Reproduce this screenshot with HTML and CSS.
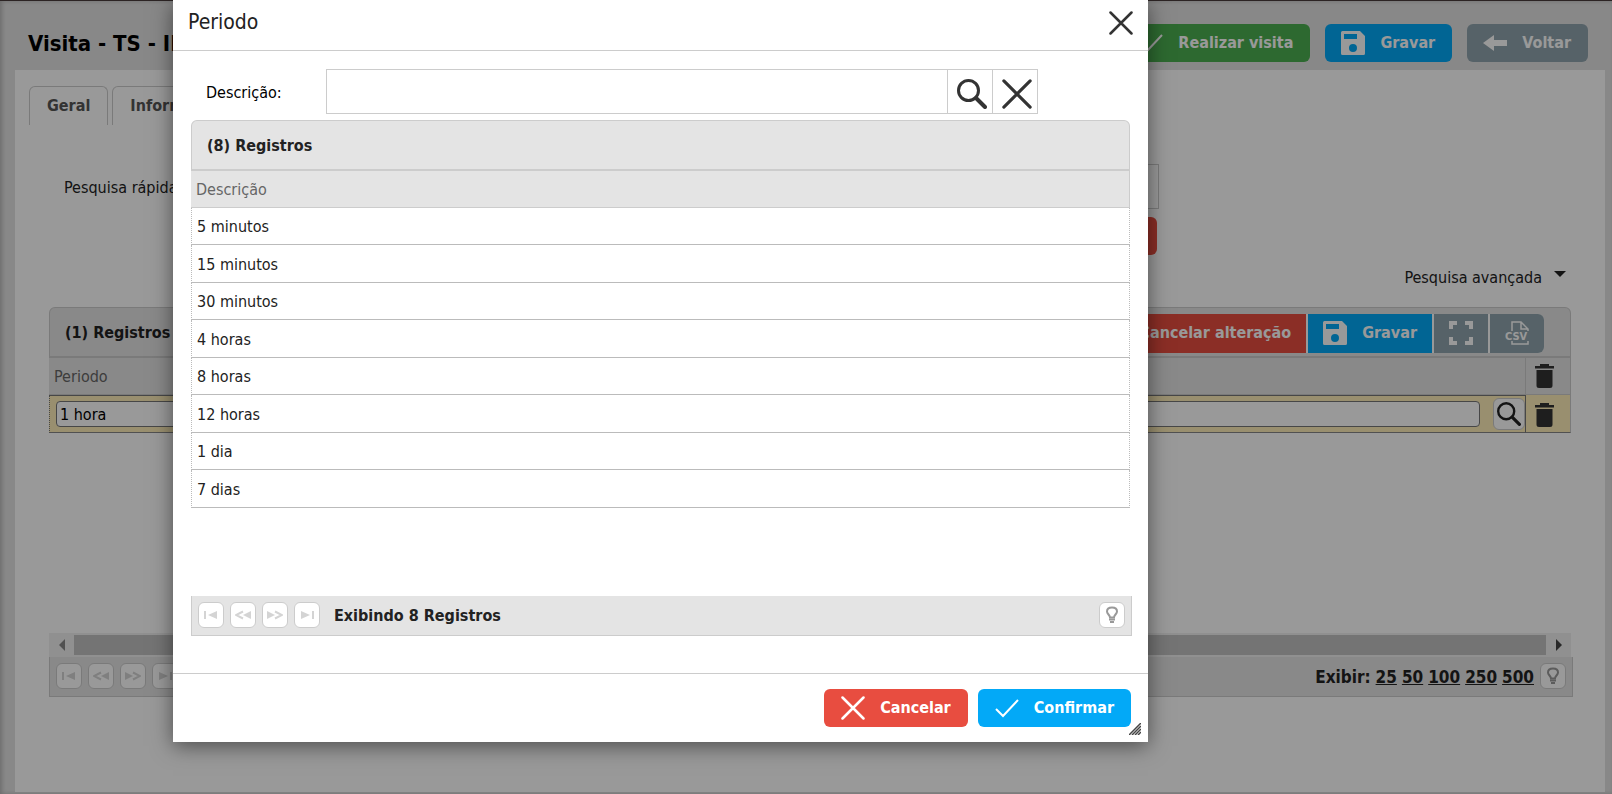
FILE: index.html
```html
<!DOCTYPE html>
<html lang="pt-BR">
  <head>
    <meta charset="utf-8" />
    <title>Visita</title>
    <link rel="stylesheet" href="styles.css">
  </head>
  <body>
    <svg class="sprite">
      <symbol id="i-check" viewBox="0 0 24 24">
        <path d="M1 13l7 7L23 4" fill="none" stroke="currentColor" stroke-width="2" />
      </symbol>
      <symbol id="i-close" viewBox="0 0 24 24">
        <path d="M1.500 1.500l21 21M22.500 1.500l-21 21" fill="none" stroke="currentColor" stroke-width="2.500" stroke-linecap="round" />
      </symbol>
      <symbol id="i-save" viewBox="0 0 24 24">
        <path fill="currentColor" fill-rule="evenodd" d="M1.500 0H19l5 5v17.500a1.500 1.500 0 0 1-1.500 1.500h-21A1.500 1.500 0 0 1 0 22.500v-21A1.500 1.500 0 0 1 1.500 0zM3 3v5h13V3zM12 13a4 4 0 1 0 0 8 4 4 0 0 0 0-8z" />
      </symbol>
      <symbol id="i-back" viewBox="0 0 24 24">
        <path fill="currentColor" d="M0 12l11-8v5h13v6H11v5z" />
      </symbol>
      <symbol id="i-search" viewBox="0 0 30 30">
        <circle cx="11.500" cy="11.500" r="10" fill="none" stroke="currentColor" stroke-width="3" />
        <path d="M19 19l9 9" stroke="currentColor" stroke-width="4" stroke-linecap="round" />
      </symbol>
      <symbol id="i-full" viewBox="0 0 24 24">
        <path fill="none" stroke="currentColor" stroke-width="4" d="M2 8V2h6M16 2h6v6M22 16v6h-6M8 22H2v-6" />
      </symbol>
      <symbol id="i-csv" viewBox="0 0 24 24">
        <path d="M7 10V1h9l7 7v2M7 20v3h16v-3M16 1v7h7" fill="none" stroke="currentColor" stroke-width="1.500" />
        <text x="0" y="19" font-size="11" fill="currentColor">CSV</text>
      </symbol>
      <symbol id="i-trash" viewBox="0 0 20 24">
        <path fill="currentColor" d="M5 0h9v2h5v2.500H0V2h5zM1.500 6h16v15.500a2.500 2.500 0 0 1-2.500 2.500H4a2.500 2.500 0 0 1-2.500-2.500z" />
      </symbol>
      <symbol id="i-first" viewBox="0 0 16 10">
        <path fill="currentColor" d="M1 1h2v8H1zM14 1v8L5 5z" />
      </symbol>
      <symbol id="i-prev" viewBox="0 0 16 10">
        <path fill="currentColor" d="M16 1v8L8 5z" />
        <path fill="none" stroke="currentColor" stroke-width="2" d="M8 1.500L1 5l7 3.500" />
      </symbol>
      <symbol id="i-bulb" viewBox="0 0 14 18">
        <path fill="none" stroke="currentColor" stroke-width="2" d="M5 11.500C5 9 2 8 2 5.500 2 3 4 1.500 7 1.500s5 1.500 5 4C12 8 9 9 9 11.500z" />
        <path stroke="currentColor" stroke-width="2" d="M4 13.500h6M5 16h4" />
      </symbol>
    </svg>

    <div class="page">
      <div class="page-header">
        <h1>Visita - TS - II</h1>
        <div class="actions">
          <button type="button" class="btn green"><svg class="icon"><use href="#i-check" /></svg>Realizar visita</button>
          <button type="button" class="btn blue"><svg class="icon"><use href="#i-save" /></svg>Gravar</button>
          <button type="button" class="btn gray"><svg class="icon"><use href="#i-back" /></svg>Voltar</button>
        </div>
      </div>

      <div class="panel">
        <div class="tabs">
          <button type="button" class="tab">Geral</button>
          <button type="button" class="tab">Informações</button>
        </div>

        <div class="quick-search">
          <label for="quick">Pesquisa rápida:</label>
          <input id="quick" type="text" />
        </div>
        <div class="quick-actions">
          <button type="button" class="btn red"><svg class="icon"><use href="#i-close" /></svg>Limpar</button>
        </div>
        <div class="advanced">
          <button type="button">Pesquisa avançada <span class="caret"></span></button>
        </div>

        <div class="grid">
          <div class="grid-title">
            <span>(1) Registros</span>
            <div class="toolbar">
              <button type="button" class="btn red"><svg class="icon"><use href="#i-close" /></svg>Cancelar alteração</button>
              <button type="button" class="btn blue"><svg class="icon"><use href="#i-save" /></svg>Gravar</button>
              <button type="button" class="btn gray" aria-label="Tela cheia"><svg class="icon"><use href="#i-full" /></svg></button>
              <button type="button" class="btn gray" aria-label="Exportar CSV"><svg class="icon"><use href="#i-csv" /></svg></button>
            </div>
          </div>
          <table class="edit-table">
            <thead>
              <tr>
                <th>Periodo</th>
                <th class="trash"><svg><use href="#i-trash" /></svg></th>
              </tr>
            </thead>
            <tbody>
              <tr>
                <td class="edit-cell">
                  <div class="edit-field">
                    <input type="text" value="1 hora" aria-label="Periodo" />
                    <button type="button" class="lookup" aria-label="Pesquisar"><svg><use href="#i-search" /></svg></button>
                  </div>
                </td>
                <td class="trash"><svg><use href="#i-trash" /></svg></td>
              </tr>
            </tbody>
          </table>
        </div>

        <div class="scrollbar">
          <span class="arrow left"></span>
          <span class="thumb"></span>
          <span class="arrow right"></span>
        </div>
        <div class="pager">
          <button type="button" class="page-btn" aria-label="Primeira"><svg><use href="#i-first" /></svg></button>
          <button type="button" class="page-btn" aria-label="Anterior"><svg><use href="#i-prev" /></svg></button>
          <button type="button" class="page-btn next" aria-label="Próxima"><svg><use href="#i-prev" /></svg></button>
          <button type="button" class="page-btn next" aria-label="Última"><svg><use href="#i-first" /></svg></button>
          <div class="page-sizes">
            <span>Exibir:</span>
            <a href="#">25</a>
            <a href="#">50</a>
            <a href="#">100</a>
            <a href="#">250</a>
            <a href="#">500</a>
          </div>
          <button type="button" class="page-btn bulb" aria-label="Dica"><svg><use href="#i-bulb" /></svg></button>
        </div>
      </div>
    </div>

    <div class="overlay">
      <div class="modal" role="dialog" aria-labelledby="modal-title">
        <div class="modal-header">
          <h2 id="modal-title">Periodo</h2>
          <button type="button" class="close" aria-label="Fechar"><svg class="icon"><use href="#i-close" /></svg></button>
        </div>

        <div class="modal-body">
          <div class="filter">
            <label for="descricao">Descrição:</label>
            <div class="filter-box">
              <input id="descricao" type="text" />
              <button type="button" aria-label="Pesquisar"><svg><use href="#i-search" /></svg></button>
              <button type="button" aria-label="Limpar"><svg><use href="#i-close" /></svg></button>
            </div>
          </div>

          <div class="grid results">
            <div class="grid-title"><span>(8) Registros</span></div>
            <table>
              <thead>
                <tr><th>Descrição</th></tr>
              </thead>
              <tbody>
                <tr><td>5 minutos</td></tr>
                <tr><td>15 minutos</td></tr>
                <tr><td>30 minutos</td></tr>
                <tr><td>4 horas</td></tr>
                <tr><td>8 horas</td></tr>
                <tr><td>12 horas</td></tr>
                <tr><td>1 dia</td></tr>
                <tr><td>7 dias</td></tr>
              </tbody>
            </table>
          </div>

          <div class="pager">
            <button type="button" class="page-btn" aria-label="Primeira"><svg><use href="#i-first" /></svg></button>
            <button type="button" class="page-btn" aria-label="Anterior"><svg><use href="#i-prev" /></svg></button>
            <button type="button" class="page-btn next" aria-label="Próxima"><svg><use href="#i-prev" /></svg></button>
            <button type="button" class="page-btn next" aria-label="Última"><svg><use href="#i-first" /></svg></button>
            <span class="count">Exibindo 8 Registros</span>
            <button type="button" class="page-btn bulb" aria-label="Dica"><svg><use href="#i-bulb" /></svg></button>
          </div>
        </div>

        <div class="modal-footer">
          <button type="button" class="btn red"><svg class="icon"><use href="#i-close" /></svg>Cancelar</button>
          <button type="button" class="btn blue"><svg class="icon"><use href="#i-check" /></svg>Confirmar</button>
        </div>
        <svg class="grip" viewBox="0 0 12 12">
          <path d="M0 12L12 0M3 12l9-9M6 12l6-6M9 12l3-3" stroke="#444" stroke-width="1.500" />
        </svg>
      </div>
    </div>
  </body>
</html>
```

FILE: styles.css
```css
* {
  box-sizing: border-box;
}
body {
  margin: 0;
  font: 16px/20px "DejaVu Sans Condensed", "Noto Sans", sans-serif;
  color: #222;
}
button,
input {
  font: inherit;
  color: inherit;
  margin: 0;
}
button {
  cursor: pointer;
}
h1,
h2 {
  margin: 0;
}
svg {
  display: block;
}
.sprite {
  display: none;
}
.icon {
  width: 24px;
  height: 24px;
}

/* page */
.page {
  min-height: 100vh;
  display: flex;
  flex-direction: column;
  padding: 0 7px 2px 15px;
  background: #e3e3e3;
  border-top: 1px solid #4a3c3c;
  box-shadow: inset 2px 0 4px rgba(0, 0, 0, 0.2);
}
.page-header {
  display: flex;
  justify-content: space-between;
  align-items: center;
  padding: 23px 17px 8px 13px;
}
.page-header h1 {
  padding-top: 2px;
  font-size: 22px;
  line-height: 26px;
  color: #000;
}
.actions {
  display: flex;
  gap: 15px;
}
.btn {
  display: flex;
  align-items: center;
  gap: 15px;
  height: 38px;
  padding: 0 16px;
  border: none;
  border-radius: 6px;
  color: #fff;
  font-weight: bold;
}
.actions .btn {
  padding-right: 17px;
}
.green {
  background: #4caf50;
}
.blue {
  background: #03a9f7;
}
.gray {
  background: #90a4ae;
}
.red {
  background: #e84d40;
}

.panel {
  flex: 1;
  display: flex;
  flex-direction: column;
  padding: 16px 32px 95px 34px;
  background: #fff;
}
.tabs {
  display: flex;
  gap: 4px;
  margin-left: -20px;
}
.tab {
  height: 39px;
  padding: 0 17px;
  border: 1px solid #ccc;
  border-bottom: none;
  border-radius: 6px 6px 0 0;
  background: none;
  color: #555;
  font-weight: bold;
}
.quick-search {
  display: flex;
  align-items: center;
  gap: 30px;
  margin-top: 39px;
  padding: 0 414px 0 15px;
}
.quick-search label,
.filter label {
  padding-top: 2px;
}
.quick-search input {
  flex: 1;
  height: 45px;
  border: 1px solid #ccc;
}
.quick-actions {
  display: flex;
  justify-content: flex-end;
  margin-top: 8px;
  padding-right: 416px;
}
.advanced {
  display: flex;
  justify-content: flex-end;
  margin: 13px 0 19px;
}
.advanced button {
  display: flex;
  gap: 12px;
  padding: 0 7px 0 0;
  border: none;
  background: none;
}
.caret {
  margin-top: 3px;
  align-self: flex-start;
  border: 6px solid transparent;
  border-top-color: #222;
  border-bottom: none;
}

/* grids */
.grid {
  flex: 1;
  margin-right: 2px;
}
.grid-title {
  display: flex;
  justify-content: space-between;
  align-items: center;
  height: 51px;
  padding: 2px 0 0 15px;
  border: 1px solid #ccc;
  border-bottom-width: 2px;
  border-radius: 6px 6px 0 0;
  background: #e4e4e4;
  font-weight: bold;
}
.toolbar {
  display: flex;
  gap: 2px;
  margin-right: 26px;
  background: #fff;
  border-radius: 0 6px 6px 0;
}
.toolbar .btn {
  height: 39px;
  padding: 0 15px;
  border-radius: 0;
}
.toolbar .btn:last-child {
  border-radius: 0 6px 6px 0;
}
table {
  width: 100%;
  border-collapse: separate;
  border-spacing: 0;
}
th {
  height: 37px;
  padding: 2px 5px 0;
  border-right: 1px solid #ccc;
  border-bottom: 1px solid #ccc;
  background: #e4e4e4;
  color: #666;
  font-weight: normal;
  text-align: left;
}
td {
  height: 38px;
  padding: 2px 5px 0;
}
.trash {
  width: 45px;
  padding: 0 9px;
  color: #333;
}
.trash svg {
  width: 20px;
  height: 24px;
}
.edit-table td {
  background: #ffefba;
  border-right: 1px solid #ccc;
  border-bottom: 1px solid #888;
}
.edit-table td.trash {
  padding-top: 3px;
}
.edit-table .edit-cell {
  padding: 0 0 0 6px;
  border-top: 1px solid #777;
  border-left: 1px dotted #777;
  border-right-color: #777;
}
.edit-field {
  display: flex;
  align-items: center;
  gap: 13px;
}
.edit-field input {
  flex: 1;
  height: 26px;
  padding: 0 3px;
  border: 1px solid #777;
  border-radius: 4px;
  background: #fff;
  color: #000;
}
.lookup {
  width: 32px;
  height: 32px;
  padding: 3px;
  border: 1px solid #ccc;
  border-radius: 6px;
  background: #fff;
}
.lookup svg {
  width: 24px;
  height: 24px;
}

.scrollbar {
  display: flex;
  align-items: center;
  height: 24px;
  margin-right: 2px;
  background: #f0f0f0;
}
.thumb {
  flex: 1;
  height: 20px;
  background: #c1c1c1;
}
.arrow {
  width: 25px;
  display: flex;
  justify-content: center;
}
.arrow::before {
  content: "";
  border: 6px solid transparent;
}
.arrow.left::before {
  border-left: none;
  border-right-color: #888;
}
.arrow.right::before {
  border-right: none;
  border-left-color: #444;
}
.pager {
  display: flex;
  align-items: flex-start;
  gap: 6px;
  height: 40px;
  padding: 6px;
  border: 1px solid #ccc;
  border-top: none;
  background: #e4e4e4;
  font-weight: bold;
}
.page-btn {
  display: flex;
  align-items: center;
  justify-content: center;
  width: 26px;
  height: 26px;
  padding: 0;
  border: 1px solid #ccc;
  border-radius: 6px;
  background: #fff;
  color: #d4d4d4;
}
.page-btn svg {
  width: 16px;
  height: 10px;
}
.next svg {
  transform: scaleX(-1);
}
.bulb {
  color: #999;
}
.bulb svg {
  width: 14px;
  height: 18px;
}
.page-sizes {
  display: flex;
  gap: 5px;
  margin-left: auto;
  font-size: 17px;
  line-height: 28px;
}
.page-sizes a {
  color: inherit;
}
.count {
  flex: 1;
  margin-left: 8px;
  line-height: 28px;
}

/* modal */
.overlay {
  position: absolute;
  inset: 0;
  padding: 0 464px 52px 173px;
  background: rgba(0, 0, 0, 0.4);
}
.modal {
  position: relative;
  min-height: 100%;
  display: flex;
  flex-direction: column;
  background: #fff;
  box-shadow: 0 4px 20px rgba(0, 0, 0, 0.5);
}
.modal-header {
  display: flex;
  justify-content: space-between;
  align-items: flex-start;
  height: 51px;
  padding: 11px 15px 0;
  border-bottom: 1px solid #ccc;
}
.modal-header h2 {
  font-size: 21px;
  line-height: 22px;
  font-weight: normal;
}
.close {
  padding: 0;
  border: none;
  background: none;
  color: #333;
}
.modal-body {
  flex: 1;
  display: flex;
  flex-direction: column;
  padding: 18px 16px 37px 18px;
}
.filter {
  display: flex;
  align-items: center;
  padding: 0 94px 0 15px;
  margin-bottom: 6px;
}
.filter label {
  width: 120px;
  color: #000;
}
.filter-box {
  flex: 1;
  display: flex;
  height: 45px;
  border: 1px solid #ccc;
}
.filter-box input {
  flex: 1;
  min-width: 0;
  border: none;
}
.filter-box button {
  width: 45px;
  padding: 4px 0 0 9px;
  border: none;
  border-left: 1px solid #ccc;
  background: none;
  color: #333;
}
.filter-box svg {
  width: 30px;
  height: 30px;
}
.results td {
  height: 37px;
  border: 1px dotted #bbb;
  border-top: none;
  border-bottom: 1px solid #bbb;
}
.results tr:nth-child(even) td {
  height: 38px;
}
.modal-footer {
  display: flex;
  justify-content: flex-end;
  gap: 10px;
  padding: 15px 17px;
  border-top: 1px solid #ccc;
}
.modal-footer .btn {
  padding: 0 17px;
}
.grip {
  position: absolute;
  right: 7px;
  bottom: 7px;
  width: 12px;
  height: 12px;
}
```
